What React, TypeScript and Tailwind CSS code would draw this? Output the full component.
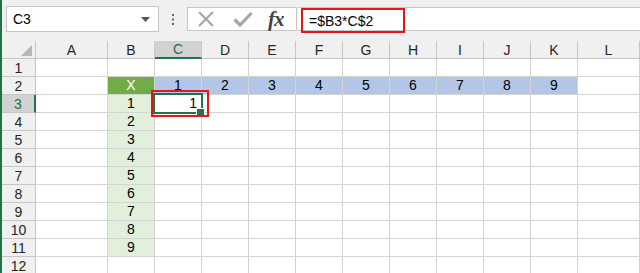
import React from "react";

const COLS = ["A", "B", "C", "D", "E", "F", "G", "H", "I", "J", "K", "L"];

function Cell({ r, c }: { r: number; c: number }) {
  let bg = "bg-white";
  let content: React.ReactNode = null;
  let align = "justify-center";
  if (r === 2 && c === 1) {
    bg = "bg-[#70ad47]";
    content = <span className="text-white">X</span>;
  } else if (r === 2 && c >= 2 && c <= 10) {
    bg = "bg-[#b4c6e7]";
    content = String(c - 1);
  } else if (r >= 3 && r <= 11 && c === 1) {
    bg = "bg-[#e2efda]";
    content = String(r - 2);
  }
  const selected = r === 3 && c === 2;
  if (selected) {
    content = "1";
    align = "justify-end pr-[4px]";
  }
  return (
    <div
      className={`relative ${selected ? "z-10" : ""} flex items-end ${align} ${bg} h-[18px] border-r border-b border-[#d4d4d4] pb-[1px] text-[14px] leading-[15px] text-black`}
    >
      {content}
      {selected && (
        <>
          <div className="absolute left-[-2px] top-[-2px] w-[50px] h-[21px] border-2 border-[#217346] pointer-events-none" />
          <div className="absolute left-[41px] top-[13px] w-[7px] h-[7px] bg-[#217346] border border-white box-content" />
          <div className="absolute left-[-4px] top-[-5px] w-[58px] h-[27px] border-2 border-[#e8141b] pointer-events-none" />
        </>
      )}
    </div>
  );
}

export default function App() {
  const rows = Array.from({ length: 12 }, (_, i) => i + 1);
  return (
    <div
      className="w-[640px] h-[273px] overflow-hidden bg-white border-l-2 border-[#217346]"
      style={{ fontFamily: '"Liberation Sans", "Noto Sans CJK JP", sans-serif' }}
    >
      {/* Top bar */}
      <div className="h-[41px] bg-[#f0f0f0] flex items-start pt-[6px]">
        <div className="ml-[4px] w-[153px] h-[26px] bg-white border border-[#c6c6c6] flex items-center justify-between pl-[6px] pr-[8px]">
          <span className="text-[14px] text-black leading-none">C3</span>
          <svg width="9" height="5" viewBox="0 0 9 5">
            <path d="M0 0 L9 0 L4.5 5 Z" fill="#555" />
          </svg>
        </div>
        <div className="w-[28px] h-[26px] flex items-center justify-center">
          <svg width="3" height="11" viewBox="0 0 3 11">
            <rect x="0" y="0" width="2" height="2" fill="#666" />
            <rect x="0" y="4.5" width="2" height="2" fill="#666" />
            <rect x="0" y="9" width="2" height="2" fill="#666" />
          </svg>
        </div>
        <div className="mt-[1px] w-[110px] h-[24px] bg-white border border-[#c6c6c6] flex items-center">
          <svg width="18" height="16" viewBox="0 0 18 16" className="ml-[9px]">
            <path d="M2 1 L16 15 M16 1 L2 15" stroke="#a6a6a6" strokeWidth="2.2" />
          </svg>
          <svg width="20" height="16" viewBox="0 0 20 16" className="ml-[18px]">
            <path d="M1.5 8.5 L7 14 L18.5 2" stroke="#a6a6a6" strokeWidth="3.2" fill="none" />
          </svg>
          <span
            className="ml-[15px] text-[21px] italic font-bold text-[#444] leading-none tracking-[-1px]"
            style={{ fontFamily: '"Liberation Serif", serif' }}
          >
            fx
          </span>
        </div>
        <div className="relative flex-1 ml-[1px] mt-[1px] h-[24px] bg-white border-t border-b border-[#c6c6c6]">
          <div className="absolute left-[3px] top-0 w-[104px] h-[25px] border-2 border-[#e8141b] flex items-center pl-[6px]">
            <span className="text-[14px] text-black leading-none">=$B3*C$2</span>
          </div>
        </div>
      </div>

      {/* Grid */}
      <div className="grid grid-cols-[34px_72px_repeat(10,47px)_1fr]">
        <div className="relative h-[18px] bg-[#f0f0f0] border-r border-b border-[#c6c6c6]">
          <svg width="11" height="11" viewBox="0 0 11 11" className="absolute right-[3px] bottom-[2px]">
            <path d="M11 0 L11 11 L0 11 Z" fill="#b8b8b8" />
          </svg>
        </div>
        {COLS.map((l, i) =>
          i === 2 ? (
            <div
              key={l}
              className="h-[18px] bg-[#d2d2d2] border-r border-[#c6c6c6] border-b-2 border-b-[#217346] flex items-center justify-center text-[14px] leading-none text-[#217346]"
            >
              {l}
            </div>
          ) : (
            <div
              key={l}
              className="h-[18px] bg-[#f0f0f0] border-r border-b border-[#c6c6c6] flex items-center justify-center text-[14px] leading-none text-[#262626]"
            >
              {l}
            </div>
          )
        )}
        {rows.map((r) => (
          <React.Fragment key={r}>
            {r === 3 ? (
              <div className="h-[18px] bg-[#d2d2d2] border-r-2 border-r-[#217346] border-b border-b-[#c6c6c6] flex items-center justify-center text-[14px] leading-none text-[#217346]">
                {r}
              </div>
            ) : (
              <div className="h-[18px] bg-[#f0f0f0] border-r border-b border-[#c6c6c6] flex items-center justify-center text-[14px] leading-none text-[#262626]">
                {r}
              </div>
            )}
            {COLS.map((_, c) => (
              <Cell key={c} r={r} c={c} />
            ))}
          </React.Fragment>
        ))}
      </div>
    </div>
  );
}
